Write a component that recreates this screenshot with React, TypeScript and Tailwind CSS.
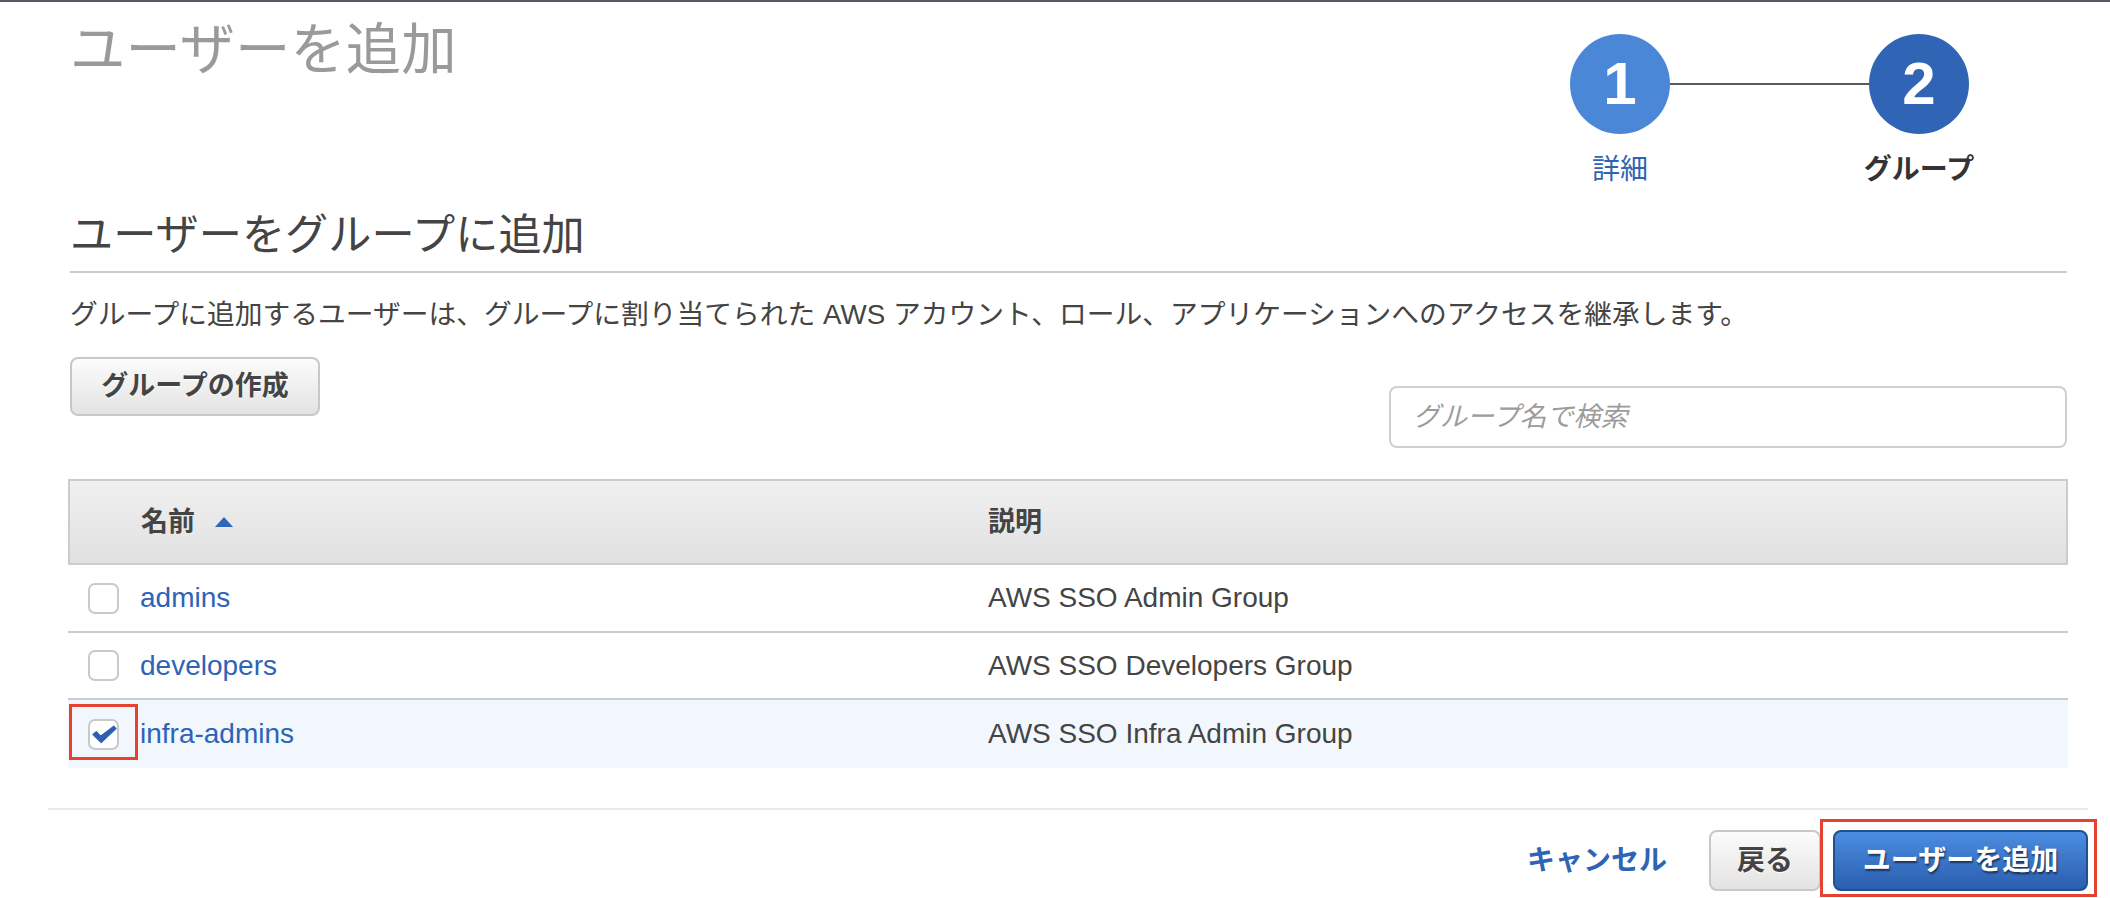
import React from "react";

const rows = [
  { name: "admins", desc: "AWS SSO Admin Group", checked: false, h: "h-[68px]" },
  { name: "developers", desc: "AWS SSO Developers Group", checked: false, h: "h-[67px]" },
  { name: "infra-admins", desc: "AWS SSO Infra Admin Group", checked: true, h: "h-[68px]" },
];

function Checkbox({ checked }: { checked: boolean }) {
  return (
    <div className="relative w-[31px] h-[31px] shrink-0 rounded-[7px] border-2 border-[#c9c9c9] bg-white">
      {checked && (
        <svg className="absolute -left-[2px] -top-[2px]" width="31" height="31" viewBox="0 0 31 31">
          <polygon
            points="5,15.5 8.3,12.6 12.6,17.2 25.8,7.2 28,9.6 13.2,23.6"
            fill="#2c5fb3"
            stroke="#2c5fb3"
            strokeWidth="1.2"
            strokeLinejoin="round"
          />
        </svg>
      )}
      {checked && (
        <span className="absolute -left-[21px] -top-[17px] -right-[21px] -bottom-[12px] border-[3px] border-[#e5432f] pointer-events-none" />
      )}
    </div>
  );
}

export default function App() {
  return (
    <div className="w-[2110px] h-[898px] bg-white overflow-hidden font-[family-name:'Liberation_Sans','Noto_Sans_CJK_JP',sans-serif]">
      <div className="h-[2px] bg-[#545b64]" />
      <div className="pl-[70px] pr-[43px]">
        {/* header */}
        <div className="flex justify-between items-start">
          <h1 className="mt-[21px] text-[55.4px] leading-[55px] text-[#9a9a9a] font-normal whitespace-nowrap">
            ユーザーを追加
          </h1>
          <div className="mt-[32px] mr-[98px] grid grid-cols-[100px_199px_100px] items-center">
            <div className="w-[100px] h-[100px] rounded-full bg-[#4a87d7] flex items-center justify-center text-white text-[60px] font-bold leading-none">
              1
            </div>
            <div className="h-[2px] bg-[#5a5b5e]" />
            <div className="w-[100px] h-[100px] rounded-full bg-[#3065b6] flex items-center justify-center text-white text-[60px] font-bold leading-none">
              2
            </div>
            <div className="mt-[22px] flex justify-center whitespace-nowrap text-[28px] leading-[28px] text-[#2e63b5]">
              詳細
            </div>
            <div />
            <div className="mt-[22px] flex justify-center whitespace-nowrap text-[28px] leading-[28px] font-bold text-[#333]">
              グループ
            </div>
          </div>
        </div>

        {/* section heading */}
        <h2 className="mt-[30px] text-[43.2px] leading-[43px] text-[#444] font-normal pb-[14px] border-b-2 border-[#cccccc] whitespace-nowrap">
          ユーザーをグループに追加
        </h2>

        <p className="mt-[28px] text-[27.75px] leading-[28px] text-[#444] whitespace-nowrap">
          グループに追加するユーザーは、グループに割り当てられた AWS アカウント、ロール、アプリケーションへのアクセスを継承します。
        </p>

        <div className="mt-[28px] flex justify-between items-start">
          <button className="w-[250px] h-[59px] rounded-[8px] border-2 border-[#c8c8c8] bg-linear-to-b from-[#fcfcfc] to-[#e3e3e3] text-[27px] font-bold text-[#444] [text-shadow:0_1px_0_#ffffff]">
            グループの作成
          </button>
          <div className="mt-[29px] w-[678px] h-[62px] rounded-[8px] border-2 border-[#cfcfcf] bg-white flex items-center pl-[22px]">
            <span className="text-[27px] italic text-[#9c9c9c]">グループ名で検索</span>
          </div>
        </div>

        {/* table */}
        <div className="mt-[31px] -ml-[2px] -mr-[1px]">
          <div className="h-[86px] border-2 border-[#cccccc] bg-linear-to-b from-[#f0f0f0] to-[#e1e1e1] grid grid-cols-[918px_1fr] items-center">
            <div className="pl-[71px] flex items-center gap-[20px]">
              <span className="text-[27px] font-bold text-[#444]">名前</span>
              <svg width="18" height="10" viewBox="0 0 18 10">
                <polygon points="9,0 18,10 0,10" fill="#2f66b9" />
              </svg>
            </div>
            <div className="text-[27px] font-bold text-[#444]">説明</div>
          </div>
          {rows.map((r, i) => (
            <div
              key={r.name}
              className={`${r.h} grid grid-cols-[920px_1fr] items-center ${
                i < rows.length - 1 ? "border-b-2 border-[#cccccc]" : ""
              } ${r.checked ? "bg-[#f1f7fd]" : "bg-white"}`}
            >
              <div className="pl-[20px] flex items-center gap-[21px]">
                <Checkbox checked={r.checked} />
                <span className="text-[28px] text-[#2e63b5]">{r.name}</span>
              </div>
              <div className="text-[28px] text-[#444]">{r.desc}</div>
            </div>
          ))}
        </div>
      </div>

      {/* footer */}
      <div className="mt-[40px] ml-[48px] mr-[22px]">
        <div className="h-[2px] bg-[#ebebeb]" />
        <div className="mt-[20px] flex justify-end items-center">
          <span className="text-[28px] font-bold text-[#2e63b5] mr-[42px]">キャンセル</span>
          <button className="w-[112px] h-[61px] rounded-[8px] border-2 border-[#c8c8c8] bg-linear-to-b from-[#fcfcfc] to-[#e3e3e3] text-[28px] font-bold text-[#444] [text-shadow:0_1px_0_#ffffff]">
            戻る
          </button>
          <div className="relative ml-[12px]">
            <button className="w-[255px] h-[61px] rounded-[8px] border-2 border-[#21508f] bg-linear-to-b from-[#4c8de1] to-[#2b5eae] text-[28px] font-bold text-white [text-shadow:1px_2px_2px_rgba(0,0,0,0.55)]">
              ユーザーを追加
            </button>
            <span className="absolute -left-[13px] -top-[11px] -right-[9px] -bottom-[6px] border-[3px] border-[#e5432f] pointer-events-none" />
          </div>
        </div>
      </div>
    </div>
  );
}
